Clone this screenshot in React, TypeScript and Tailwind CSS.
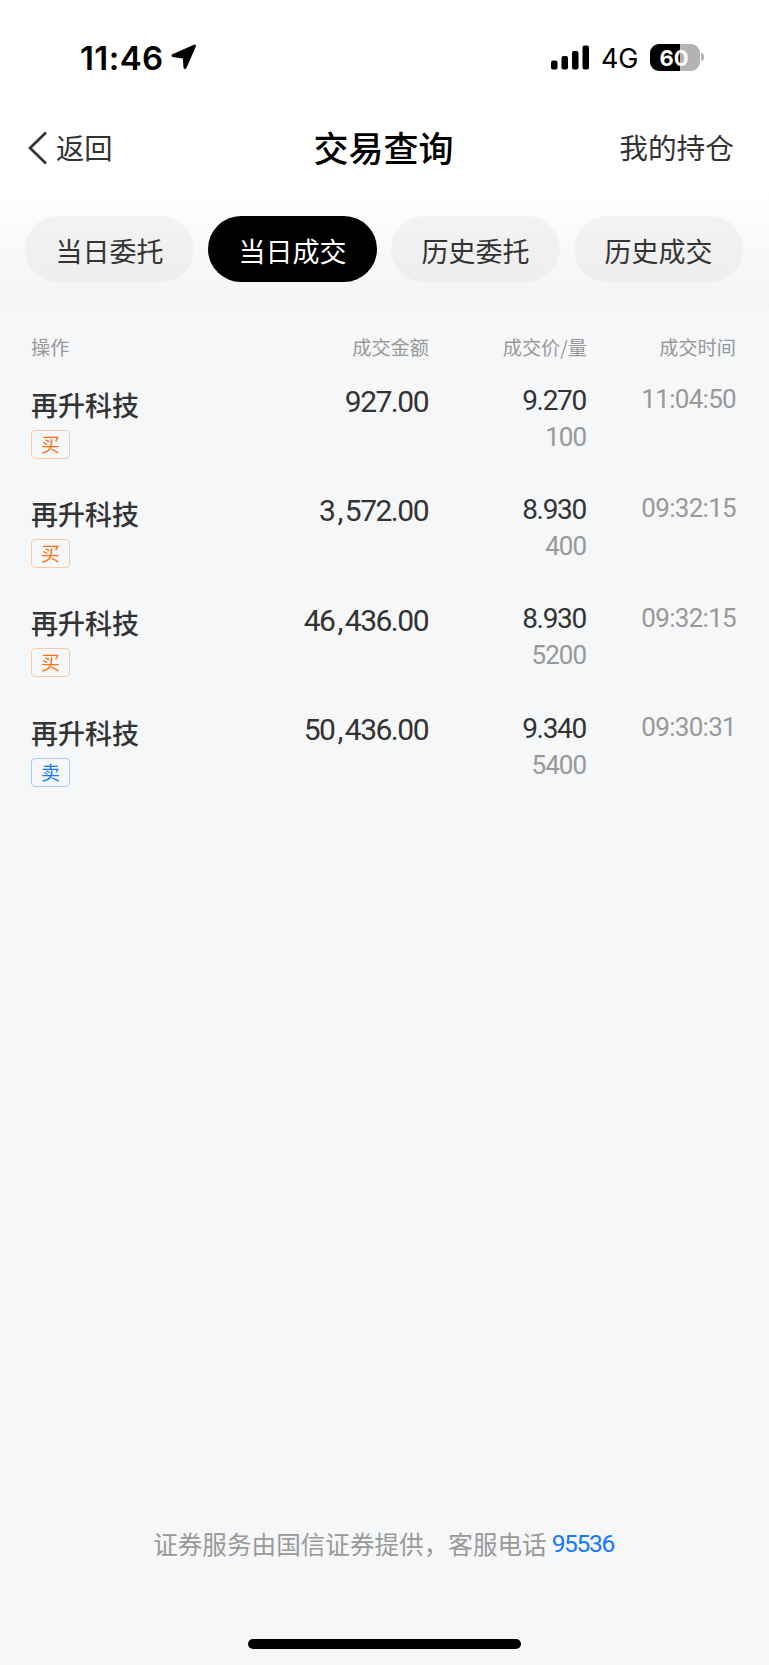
import React from "react";

const tabs = ["当日委托", "当日成交", "历史委托", "历史成交"];

const trades = [
  { name: "再升科技", side: "买", amount: "927.00", price: "9.270", volume: "100", time: "11:04:50" },
  { name: "再升科技", side: "买", amount: "3,572.00", price: "8.930", volume: "400", time: "09:32:15" },
  { name: "再升科技", side: "买", amount: "46,436.00", price: "8.930", volume: "5200", time: "09:32:15" },
  { name: "再升科技", side: "卖", amount: "50,436.00", price: "9.340", volume: "5400", time: "09:30:31" },
];

const StatusBar = () => {
  return (
    <div className="flex h-[114px] items-center pl-[80px] pr-[65px] font-['Inter',sans-serif] text-black">
      <span className="w-[91px] pt-[2px] text-[33px] leading-none font-semibold tracking-[0.4px]">11:46</span>
      <svg width="26" height="26" viewBox="0 0 26 26" stroke="#000" strokeWidth="3" strokeLinejoin="round">
        <path d="M2 11.500 23.500 2 14 23.500 13.300 13.200Z" />
      </svg>
      <div className="ml-auto flex items-center">
        <svg width="38" height="25" viewBox="0 0 38 25">
          <rect x="0" y="15.5" width="6.5" height="9" rx="2" />
          <rect x="10.5" y="11" width="6.5" height="13.5" rx="2" />
          <rect x="21" y="6" width="6.5" height="18.5" rx="2" />
          <rect x="31.5" y="0.5" width="6.5" height="24" rx="2" />
        </svg>
        <span className="ml-[12px] w-[36px] pt-[2px] text-[27px] leading-none tracking-[-0.3px]">4G</span>
        <div className="ml-[13px] flex h-[27px] w-[50px] items-center justify-center rounded-[9px] bg-[linear-gradient(90deg,#000_60%,#b3b3b3_60%)] pt-[1px] pr-[2px] text-[22px] leading-none font-bold text-white">
          60
        </div>
        <div className="ml-[1px] h-[8px] w-[3px] rounded-r-full bg-[#b3b3b3]" />
      </div>
    </div>
  );
};

const NavBar = () => {
  return (
    <div className="grid h-[68px] grid-cols-3 items-center pl-[28px] pr-[35px] text-[#333]">
      <div className="flex items-center text-[28.3px] leading-none">
        <svg width="20" height="34" viewBox="0 0 20 34" fill="none" stroke="#333" strokeWidth="2.7">
          <path d="M18 1.5 2 17l16 15.5" />
        </svg>
        <span className="ml-[8px] pb-[1px]">返回</span>
      </div>
      <h1 className="pb-[4px] pl-[5px] text-center text-[35px] leading-none font-medium text-black">交易查询</h1>
      <span className="pb-[1px] text-right text-[28.7px] leading-none">我的持仓</span>
    </div>
  );
};

const Tabs = () => {
  return (
    <div className="flex h-[124px] gap-[14px] bg-linear-to-b from-white from-5% to-[#f4f4f4] pt-[34px] pr-[26px] pl-[25px]">
      {tabs.map((tab) => (
        <button
          key={tab}
          className={
            tab === "当日成交"
              ? "h-[66px] flex-1 rounded-full bg-black pt-[2px] text-[27px] leading-none text-white"
              : "h-[66px] flex-1 rounded-full bg-linear-to-b from-[#f3f3f3] to-[#eeeeee] pt-[2px] text-[27px] leading-none text-[#333]"
          }
        >
          {tab}
        </button>
      ))}
    </div>
  );
};

const Amount = ({ value }: { value: string }) => {
  const parts = value.split(",");
  return (
    <span className="pt-[4px] text-[30px] leading-[36px] tracking-[-1.5px]">
      {parts.map((part, i) => (
        <React.Fragment key={i}>
          {i > 0 && <span className="px-[3px]">,</span>}
          {part}
        </React.Fragment>
      ))}
    </span>
  );
};

const TradeRow = ({ name, side, amount, price, volume, time }: (typeof trades)[number]) => {
  return (
    <div className="grid h-[109.4px] grid-cols-[200px_197px_158px_150px] text-right font-['Roboto','Noto_Sans_CJK_SC',sans-serif] text-[#333]">
      <div className="flex flex-col items-start pt-[8.5px]">
        <span className="text-[27px] leading-[36px] font-medium">{name}</span>
        <span
          className={
            side === "买"
              ? "mt-[5px] flex h-[29px] w-[39px] items-center justify-center rounded-[4px] border border-[#f9caa6] pt-[2px] text-[19px] leading-none text-[#f97316]"
              : "mt-[5px] flex h-[29px] w-[39px] items-center justify-center rounded-[4px] border border-[#a9cbfb] pt-[2px] text-[19px] leading-none text-[#1677ff]"
          }
        >
          {side}
        </span>
      </div>
      <Amount value={amount} />
      <div className="flex flex-col pt-[2.5px]">
        <span className="text-[28px] leading-[36px] tracking-[-1.3px]">{price}</span>
        <span className="text-[26px] leading-[36px] tracking-[-1px] text-[#999]">{volume}</span>
      </div>
      <span className="pt-[1px] text-[26px] leading-[36px] tracking-[-0.7px] text-[#999]">{time}</span>
    </div>
  );
};

const App = () => {
  return (
    <main className="flex h-[1665px] w-[769px] flex-col bg-[#f5f7f9] font-['Noto_Sans_CJK_SC',sans-serif]">
      <header className="bg-white">
        <StatusBar />
        <NavBar />
        <Tabs />
      </header>
      <section className="px-[31px]">
        <div className="grid h-[74px] grid-cols-[200px_198px_158px_149px] pt-[31px] text-right text-[19.2px] leading-[20px] text-[#999]">
          <span className="text-left">操作</span>
          <span>成交金额</span>
          <span>成交价/量</span>
          <span>成交时间</span>
        </div>
        {trades.map((trade) => (
          <TradeRow key={trade.amount} {...trade} />
        ))}
      </section>
      <footer className="mt-auto flex flex-col items-center">
        <p className="flex items-center pr-[2px] text-[24.6px] leading-[30px] text-[#999]">
          证券服务由国信证券提供，客服电话
          <a className="ml-[5px] pt-[2px] font-['Roboto',sans-serif] text-[24.6px] tracking-[-1.4px] text-[#1677ff]">95536</a>
        </p>
        <div className="mt-[80px] mb-[16px] h-[10px] w-[273px] rounded-full bg-black" />
      </footer>
    </main>
  );
};

export default App;
